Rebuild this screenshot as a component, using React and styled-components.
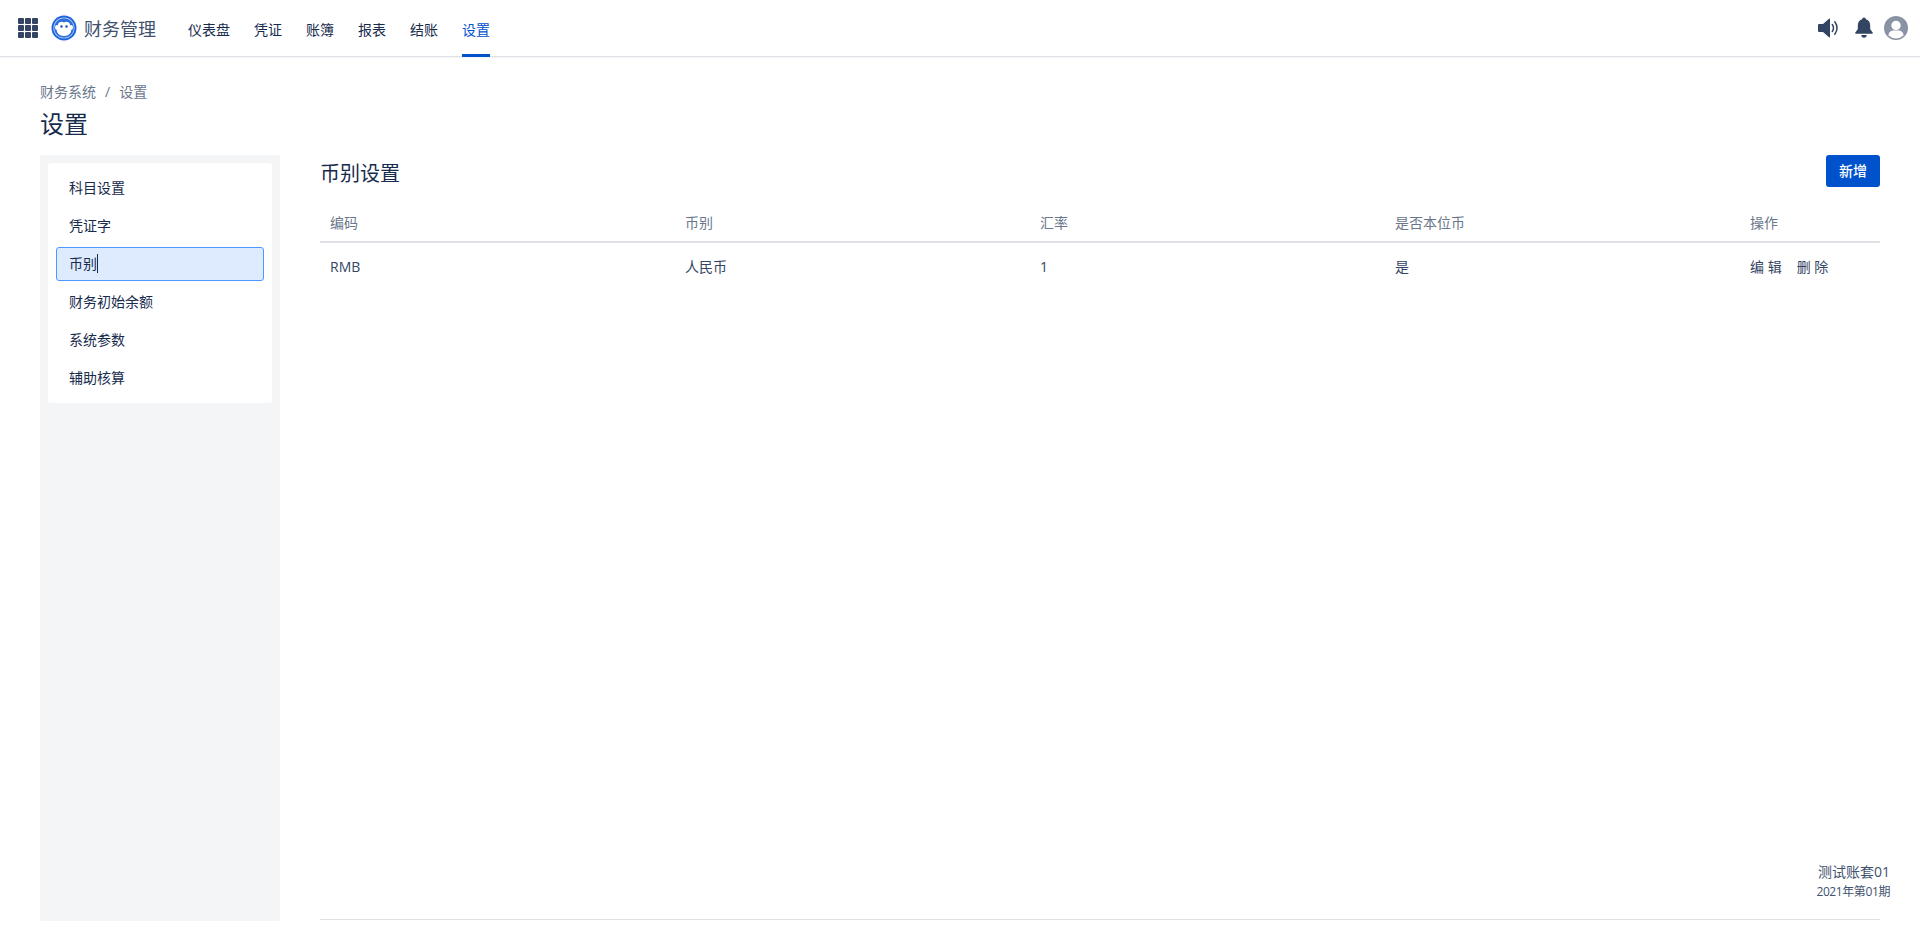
import styled, { createGlobalStyle } from "styled-components"

const menus = ["仪表盘", "凭证", "账簿", "报表", "结账", "设置"]
const sideItems = ["科目设置", "凭证字", "币别", "财务初始余额", "系统参数", "辅助核算"]
const columns = ["编码", "币别", "汇率", "是否本位币", "操作"]

export default function App() {
    return (
        <Page>
            <GlobalStyle />
            <Header>
                <Waffle>
                    {Array.from({ length: 9 }).map((_, i) => <Dot key={i} />)}
                </Waffle>
                <MonkeyLogo />
                <Brand>财务管理</Brand>
                <Nav>
                    {menus.map((m) => (
                        <NavItem key={m} $active={m === "设置"}>{m}</NavItem>
                    ))}
                </Nav>
                <Tools>
                    <SpeakerIcon />
                    <BellIcon />
                    <UserIcon />
                </Tools>
            </Header>
            <Main>
                <Breadcrumb>
                    <span>财务系统</span>
                    <Slash>/</Slash>
                    <span>设置</span>
                </Breadcrumb>
                <PageTitle>设置</PageTitle>
                <Body>
                    <Sidebar>
                        <SideCard>
                            {sideItems.map((s) => (
                                <SideItem key={s} $active={s === "币别"}>
                                    {s}
                                    {s === "币别" && <Caret />}
                                </SideItem>
                            ))}
                        </SideCard>
                    </Sidebar>
                    <Content>
                        <ContentHead>
                            <ContentTitle>币别设置</ContentTitle>
                            <AddButton>新增</AddButton>
                        </ContentHead>
                        <Row $head>
                            {columns.map((c) => <Cell key={c}>{c}</Cell>)}
                        </Row>
                        <Row>
                            <Cell>RMB</Cell>
                            <Cell>人民币</Cell>
                            <Cell>1</Cell>
                            <Cell>是</Cell>
                            <Cell>
                                <ActionLink>编 辑</ActionLink>
                                <ActionLink>删 除</ActionLink>
                            </Cell>
                        </Row>
                    </Content>
                </Body>
                <PeriodInfo>
                    <BookName>测试账套01</BookName>
                    <PeriodName>2021年第01期</PeriodName>
                </PeriodInfo>
            </Main>
        </Page>
    );
}

function MonkeyLogo() {
    return (
        <LogoSvg width="26" height="26" viewBox="0 0 26 26">
            <circle cx="13" cy="13" r="12.5" fill="#1F66DE" />
            <circle cx="13" cy="13" r="10.6" fill="#B9D0F5" />
            <circle cx="13" cy="13" r="9.8" fill="#2F6FDB" />
            <ellipse cx="6" cy="12.5" rx="2" ry="2.400" fill="#fff" />
            <ellipse cx="20" cy="12.5" rx="2" ry="2.400" fill="#fff" />
            <path d="M8.500 7.200c1.800-.9 3.400-.6 4.500.3 1.100-.9 2.700-1.200 4.500-.3 1.500.9 1.800 2.900 1.200 4.700 1.300 1.500 2 3.300 1.200 5-1.100 2.500-3.700 4-6.900 4s-5.800-1.500-6.900-4c-.8-1.700-.1-3.500 1.200-5-.6-1.800-.3-3.800 1.200-4.700z" fill="#fff" />
            <circle cx="10.500" cy="11.500" r="1.200" fill="#1D4FA8" />
            <circle cx="15.500" cy="11.500" r="1.200" fill="#1D4FA8" />
        </LogoSvg>
    );
}

function SpeakerIcon() {
    return (
        <ToolSvg width="24" height="24" viewBox="0 0 24 24">
            <path d="M3 8h4L13 2.800c.5-.4 1-.2 1 .5v17.400c0 .7-.5.9-1 .5L7 16H3a1 1 0 0 1-1-1V9a1 1 0 0 1 1-1z" fill="#344563" />
            <path d="M16.300 8.500c1.500 2.200 1.500 4.800 0 7M18.800 5.800c2.700 3.800 2.700 8.600 0 12.400" stroke="#344563" strokeWidth="1.500" fill="none" strokeLinecap="round" />
        </ToolSvg>
    );
}

function BellIcon() {
    return (
        <ToolSvg width="24" height="24" viewBox="0 0 24 24" $left={12}>
            <path d="M12 1.500a2 2 0 0 1 2 1.700c2.900.9 4.200 3.300 4.200 6.300v3.700l2.500 3.300c.4.600.1 1.200-.7 1.200H4c-.8 0-1.100-.6-.7-1.200l2.500-3.300V9.500c0-3 1.300-5.400 4.200-6.300a2 2 0 0 1 2-1.700z" fill="#344563" />
            <path d="M9.300 19h5.400a2.700 2.700 0 0 1-5.400 0z" fill="#344563" />
        </ToolSvg>
    );
}

function UserIcon() {
    return (
        <ToolSvg width="24" height="24" viewBox="0 0 24 24" $left={8}>
            <circle cx="12" cy="12" r="12" fill="#8993A4" />
            <circle cx="12" cy="9.500" r="4.700" fill="#fff" />
            <path d="M4.500 19.500c0-3.500 2.500-5 5-5h5c2.500 0 5 1.500 5 5a11 11 0 0 1-15 0z" fill="#fff" />
        </ToolSvg>
    );
}

const GlobalStyle = createGlobalStyle`
html, body {
    margin: 0;
    padding: 0;
    background: #FFFFFF;
}
* {
    box-sizing: border-box;
}
body {
    font-family: "Open Sans", "Noto Sans CJK SC", sans-serif;
    font-size: 14px;
    color: #172B4D;
}
`

const Page = styled.div`
height: 937px;
display: flex;
flex-direction: column;
overflow: hidden;
`

const Header = styled.header`
height: 57px;
flex-shrink: 0;
display: flex;
align-items: center;
padding: 0 12px 0 18px;
border-bottom: 1px solid #DFE1E6;
box-shadow: 0 1px 1px rgba(9, 30, 66, 0.05);
`

const Waffle = styled.div`
width: 20px;
height: 20px;
display: grid;
grid-template-columns: repeat(3, 6px);
grid-auto-rows: 6px;
gap: 1px;
`

const Dot = styled.span`
background: #344563;
border-radius: 1px;
`

const LogoSvg = styled.svg`
display: block;
margin-left: 13px;
`

const Brand = styled.div`
margin-left: 7px;
font-size: 18px;
color: #42526E;
width: 72px;
white-space: nowrap;
`

const Nav = styled.nav`
margin-left: 32px;
height: 100%;
display: flex;
gap: 24px;
`

const NavItem = styled.div`
align-self: flex-start;
height: 57px;
display: flex;
align-items: center;
font-size: 14px;
color: ${(p) => (p.$active ? "#0052CC" : "#172B4D")};
border-bottom: 3px solid ${(p) => (p.$active ? "#0052CC" : "transparent")};
padding-top: 3px;
`

const Tools = styled.div`
margin-left: auto;
display: flex;
align-items: center;
`

const ToolSvg = styled.svg`
display: block;
margin-left: ${(p) => p.$left || 0}px;
`

const Main = styled.main`
position: relative;
flex: 1;
min-height: 0;
display: flex;
flex-direction: column;
padding: 25px 40px 16px;
`

const Breadcrumb = styled.div`
height: 20px;
display: flex;
align-items: center;
font-size: 14px;
line-height: 20px;
color: #6B778C;
`

const Slash = styled.span`
margin: 0 9px;
`

const PageTitle = styled.h1`
margin: 6px 0 15px;
font-size: 24px;
line-height: 32px;
font-weight: 400;
color: #172B4D;
`

const Body = styled.div`
flex: 1;
min-height: 0;
display: flex;
gap: 40px;
`

const Sidebar = styled.aside`
width: 240px;
flex-shrink: 0;
padding: 8px;
background: #F4F5F7;
border-radius: 3px;
`

const SideCard = styled.div`
display: flex;
flex-direction: column;
gap: 4px;
padding: 8px;
background: #FFFFFF;
border-radius: 3px;
`

const SideItem = styled.div`
height: 34px;
display: flex;
align-items: center;
padding: 0 0 2px 12px;
font-size: 14px;
color: #172B4D;
border-radius: 3px;
border: 1px solid ${(p) => (p.$active ? "#4C9AFF" : "transparent")};
background: ${(p) => (p.$active ? "#DEEBFF" : "transparent")};
`

const Caret = styled.span`
width: 1px;
height: 19px;
background: #172B4D;
`

const Content = styled.section`
flex: 1;
min-width: 0;
display: flex;
flex-direction: column;
border-bottom: 1px solid #DFE1E6;
margin-bottom: 1px;
`

const ContentHead = styled.div`
height: 32px;
display: flex;
align-items: center;
justify-content: space-between;
`

const ContentTitle = styled.h2`
margin: 2px 0 0;
font-size: 20px;
font-weight: 400;
color: #172B4D;
`

const AddButton = styled.button`
width: 54px;
height: 32px;
padding: 0 0 2px;
border: none;
border-radius: 3px;
background: #0052CC;
color: #FFFFFF;
font-family: inherit;
font-size: 14px;
font-weight: 500;
`

const Row = styled.div`
display: grid;
grid-template-columns: 355px 355px 355px 355px 1fr;
align-items: center;
height: ${(p) => (p.$head ? "56px" : "46px")};
padding-top: ${(p) => (p.$head ? "16px" : "0")};
font-size: 14px;
color: ${(p) => (p.$head ? "#6B778C" : "#344563")};
border-bottom: ${(p) => (p.$head ? "2px solid #DFE1E6" : "none")};
`

const Cell = styled.div`
padding-left: 10px;
white-space: nowrap;
`

const ActionLink = styled.a`
color: #344563;
margin-right: 15px;
`

const PeriodInfo = styled.div`
position: absolute;
right: 30px;
top: 805px;
text-align: right;
color: #42526E;
`

const BookName = styled.div`
font-size: 14px;
line-height: 20px;
`

const PeriodName = styled.div`
font-size: 12px;
line-height: 20px;
letter-spacing: -0.4px;
`
